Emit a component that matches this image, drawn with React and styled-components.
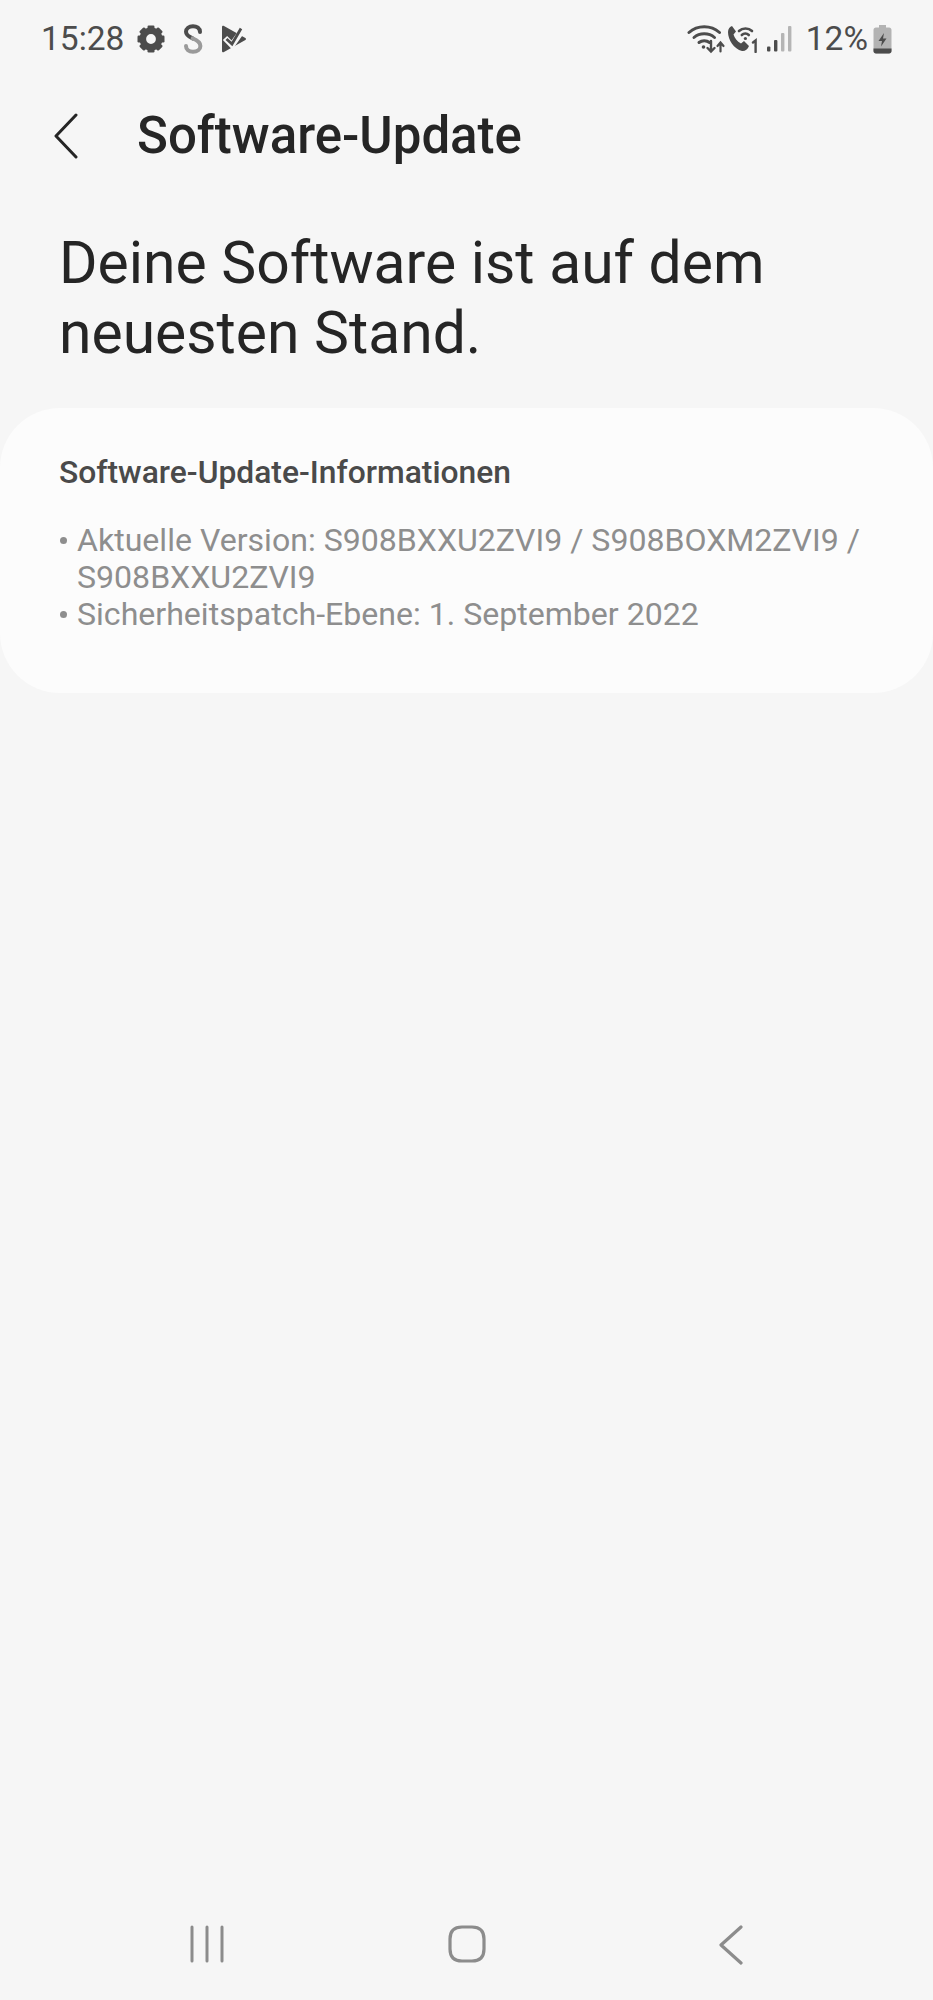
import React from 'react';
import styled, { createGlobalStyle } from 'styled-components';

const GlobalStyle = createGlobalStyle`
  html, body {
    margin: 0;
    padding: 0;
    background: #f6f6f6;
    font-family: Roboto, "Liberation Sans", sans-serif;
  }
`;

const Screen = styled.div`
  width: 933px;
  height: 2000px;
  display: flex;
  flex-direction: column;
  background: #f6f6f6;
  overflow: hidden;
`;

const StatusBar = styled.div`
  height: 78px;
  padding: 0 41px;
  display: flex;
  align-items: center;
  justify-content: space-between;
  color: #4c4c4c;
`;

const StatusGroup = styled.div`
  display: flex;
  align-items: center;
  gap: ${props => props.$gap || 0}px;
`;

const StatusText = styled.span`
  font-size: 33.5px;
  line-height: 40px;
  margin-right: ${props => props.$after || 0}px;
  margin-left: ${props => props.$before || 0}px;
`;

const Icon = styled.svg`
  display: block;
  flex: none;
`;

const Header = styled.header`
  height: 116px;
  padding-left: 54px;
  display: flex;
  align-items: center;
`;

const BackLink = styled.div`
  width: 83px;
  flex: none;
`;

const Title = styled.h1`
  margin: 0;
  font-size: 51px;
  line-height: 56px;
  font-weight: 500;
  color: #252525;
`;

const Headline = styled.h2`
  margin: 34px 0 0;
  padding: 0 59px;
  font-size: 58.8px;
  line-height: 70px;
  font-weight: 400;
  color: #252525;
`;

const InfoCard = styled.section`
  margin-top: 40px;
  height: 285px;
  box-sizing: border-box;
  padding: 43px 59px 0;
  background: #fcfcfc;
  border-radius: 60px;
`;

const CardTitle = styled.h3`
  margin: 0 0 29px;
  font-size: 31.8px;
  line-height: 42px;
  font-weight: 500;
  color: #4a4a4a;
`;

const InfoList = styled.ul`
  margin: 0;
  padding: 0;
  list-style: none;
`;

const InfoItem = styled.li`
  position: relative;
  padding-left: 18px;
  font-size: 32.1px;
  line-height: 37px;
  color: #8e8e8e;
  &::before {
    content: '';
    position: absolute;
    left: 1px;
    top: 15px;
    width: 7px;
    height: 7px;
    border-radius: 50%;
    background: #8e8e8e;
  }
`;

const NavBar = styled.nav`
  margin-top: auto;
  height: 75px;
  box-sizing: border-box;
  display: grid;
  grid-template-columns: 415px 104px 1fr;
  align-items: start;
`;

const NavSlot = styled.div`
  display: flex;
  justify-content: ${props => props.$align || 'center'};
  padding: ${props => props.$pad || '0'};
`;

const GearIcon = () => {
  const teeth = [];
  for (let i = 0; i < 8; i++) {
    teeth.push(<rect key={i} x="10.5" y="0.5" width="7" height="7" rx="1.2" transform={`rotate(${i * 45} 14 14)`} />);
  }
  return (
    <Icon width="28" height="28" viewBox="0 0 28 28" fill="#4c4c4c">
      {teeth}
      <circle cx="14" cy="14" r="8.2" fill="none" stroke="#4c4c4c" strokeWidth="6.6" />
    </Icon>
  );
};

const SIcon = () => (
  <Icon width="20" height="30" viewBox="0 0 20 30" fill="none" strokeWidth="4" strokeLinecap="round">
    <path d="M17 8 C17 4.2 13.8 2.2 10 2.2 C6 2.2 3 4.4 3 7.8 C3 10.8 5.4 12.6 9.6 14.4" stroke="#4c4c4c" />
    <path d="M9.6 14.4 C14.6 16.4 17.4 18.2 17.4 22 C17.4 25.6 14.2 27.8 10 27.8 C5.8 27.8 3 25.6 3 22" stroke="#9a9a9a" />
  </Icon>
);

const PlayCheckIcon = () => (
  <Icon width="26" height="28" viewBox="0 0 26 28">
    <path d="M1 2 C1 .9 2 .4 3 1 L24.4 13 C25.2 13.5 25.2 14.5 24.4 15 L3 27 C2 27.6 1 27 1 26 Z" fill="#4c4c4c" />
    <path d="M4 13 L11 20 L23 3" fill="none" stroke="#f6f6f6" strokeWidth="6" />
    <path d="M5.5 14 L11 19 L20 3.5" fill="none" stroke="#4c4c4c" strokeWidth="2.8" />
  </Icon>
);

const WifiIcon = () => (
  <Icon width="40" height="30" viewBox="0 0 40 30" fill="none" stroke="#4c4c4c" strokeLinecap="round">
    <path d="M2 8.5 C10.5 .8 24 .8 32.5 8.5" strokeWidth="3" />
    <path d="M7 13.5 C12.5 8.6 22 8.6 27.5 13.5" strokeWidth="3" />
    <path d="M12 18.5 C15 16 19.5 16 22.5 18.5" strokeWidth="3" />
    <circle cx="16.5" cy="23" r="1.8" fill="#4c4c4c" stroke="none" />
    <path d="M24 17 V27 M20.5 24 L24 27.5 L27.5 24" strokeWidth="2.4" />
    <path d="M33.5 27.5 V19 M30.5 22 L33.5 18.5 L36.5 22" strokeWidth="2.2" />
  </Icon>
);

const CallWifiIcon = () => (
  <Icon width="32" height="28" viewBox="0 0 32 28" fill="none" stroke="#4c4c4c" strokeLinecap="round">
    <path d="M1 7 C1 4 3 1.5 5 1 L9 6.5 L6.5 9.5 C7.5 13 10 16.5 14 18.5 L17 16 L22 21 C20.5 25 17.5 26.5 15 26 C7 24 1 15 1 7 Z" fill="#4c4c4c" stroke="none" />
    <path d="M12 6 C15.5 2.6 21.5 2.6 25 6" strokeWidth="2.6" />
    <path d="M14.8 10 C16.8 8.2 19.8 8.2 21.8 10" strokeWidth="2.6" />
    <circle cx="18.4" cy="13.5" r="1.6" fill="#4c4c4c" stroke="none" />
    <path d="M26 17.5 L28.6 15.5 V27" strokeWidth="2.4" />
  </Icon>
);

const SignalIcon = () => (
  <Icon width="26" height="26" viewBox="0 0 26 26" fill="#b5b5b5">
    <rect x="0" y="20.5" width="3.4" height="5" rx="1" fill="#4c4c4c" />
    <rect x="7" y="14" width="3.4" height="11.5" rx="1" fill="#4c4c4c" />
    <rect x="14" y="7" width="3.4" height="18.5" rx="1" />
    <rect x="21" y="0" width="3.4" height="25.5" rx="1" />
  </Icon>
);

const BatteryIcon = () => (
  <Icon width="19" height="29" viewBox="0 0 19 29">
    <path d="M6 0 H13 V2.5 H16 C17.5 2.5 18.5 3.5 18.5 5 V26 C18.5 27.5 17.5 28.5 16 28.5 H3 C1.5 28.5 .5 27.5 .5 26 V5 C.5 3.5 1.5 2.5 3 2.5 H6 Z" fill="#b3b3b3" />
    <path d="M.5 23.5 H18.5 V26 C18.5 27.5 17.5 28.5 16 28.5 H3 C1.5 28.5 .5 27.5 .5 26 Z" fill="#4c4c4c" />
    <path d="M11 8 L5.5 16 H9 L8 21.5 L13.5 13.5 H10 Z" fill="#4c4c4c" />
  </Icon>
);

const ChevronLeft = ({ width, height, stroke, strokeWidth }) => (
  <Icon width={width} height={height} viewBox={`0 0 ${width} ${height}`} fill="none" stroke={stroke} strokeWidth={strokeWidth} strokeLinecap="round" strokeLinejoin="round">
    <path d={`M${width - 2} 2 L2 ${height / 2} L${width - 2} ${height - 2}`} />
  </Icon>
);

const RecentsIcon = () => (
  <Icon width="36" height="38" viewBox="0 0 36 38" stroke="#8c8c8c" strokeWidth="3" strokeLinecap="round">
    <path d="M3 2 V36 M18 2 V36 M33 2 V36" />
  </Icon>
);

const HomeIcon = () => (
  <Icon width="38" height="38" viewBox="0 0 38 38" fill="none" stroke="#8c8c8c" strokeWidth="3.2">
    <path d="M14 2 H24 C32 2 36 6 36 14 V24 C36 32 32 36 24 36 H14 C6 36 2 32 2 24 V14 C2 6 6 2 14 2 Z" />
  </Icon>
);

const App = () => (
  <Screen>
    <GlobalStyle />
    <StatusBar>
      <StatusGroup>
        <StatusText $after={13}>15:28</StatusText>
        <StatusGroup $gap={18}>
          <GearIcon />
          <SIcon />
          <PlayCheckIcon />
        </StatusGroup>
      </StatusGroup>
      <StatusGroup>
        <WifiIcon />
        <StatusGroup $gap={8}>
          <CallWifiIcon />
          <SignalIcon />
        </StatusGroup>
        <StatusText $before={13} $after={5}>12%</StatusText>
        <BatteryIcon />
      </StatusGroup>
    </StatusBar>
    <Header>
      <BackLink>
        <ChevronLeft width={24} height={46} stroke="#252525" strokeWidth={3} />
      </BackLink>
      <Title>Software-Update</Title>
    </Header>
    <Headline>Deine Software ist auf dem neuesten Stand.</Headline>
    <InfoCard>
      <CardTitle>Software-Update-Informationen</CardTitle>
      <InfoList>
        <InfoItem>Aktuelle Version: S908BXXU2ZVI9 / S908BOXM2ZVI9 / S908BXXU2ZVI9</InfoItem>
        <InfoItem>Sicherheitspatch-Ebene: 1. September 2022</InfoItem>
      </InfoList>
    </InfoCard>
    <NavBar>
      <NavSlot $align="flex-end" $pad="0 190px 0 0">
        <RecentsIcon />
      </NavSlot>
      <NavSlot>
        <HomeIcon />
      </NavSlot>
      <NavSlot $align="flex-start" $pad="0 0 0 200px">
        <ChevronLeft width={24} height={40} stroke="#8c8c8c" strokeWidth={3.2} />
      </NavSlot>
    </NavBar>
  </Screen>
);

export default App;
